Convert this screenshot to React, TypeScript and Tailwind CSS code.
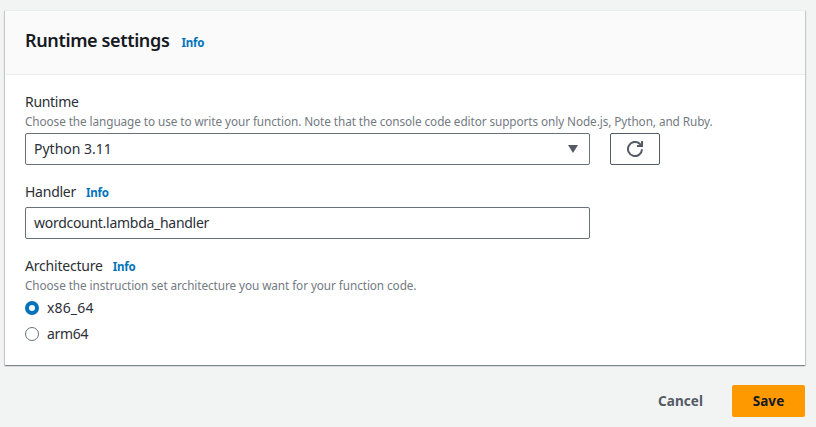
import { useState } from "react";

function Info({ className = "" }: { className?: string }) {
  return (
    <a href="#" className={`text-[11.5px] font-bold leading-4 tracking-[-0.2px] text-[#0073bb] ${className}`}>
      Info
    </a>
  );
}

function Radio({ label, checked, onSelect, tracking }: { label: string; checked: boolean; onSelect: () => void; tracking: string }) {
  return (
    <button type="button" role="radio" aria-checked={checked} onClick={onSelect} className="flex h-[22px] items-center gap-2">
      <span
        className={
          checked
            ? "size-3.5 rounded-full border-4 border-[#0073bb] bg-white"
            : "size-3.5 rounded-full border border-[#687078] bg-white"
        }
      />
      <span className={`text-[14px] leading-[22px] ${tracking}`}>{label}</span>
    </button>
  );
}

export default function App() {
  const [arch, setArch] = useState("x86_64");
  return (
    <main className="h-[427px] w-[816px] overflow-hidden bg-[#f2f3f3] pt-[10px] pr-[11px] pl-[5px] font-['Noto_Sans',sans-serif] text-[14px] leading-[22px] text-[#2b2f36]">
      <section className="h-[355px] border-t border-[#eaeded] bg-white shadow-[0_1px_1px_0_rgba(0,28,36,0.3),1px_1px_1px_0_rgba(0,28,36,0.15),-1px_1px_1px_0_rgba(0,28,36,0.15)]">
        <header className="flex h-16 items-center border-b border-[#eaeded] bg-[#fafafa] px-5 pb-1">
          <h2 className="-mt-px text-[18px] leading-[22px] font-semibold tracking-[-0.36px] text-[#16191f]">Runtime settings</h2>
          <Info className="mt-1 ml-3" />
        </header>
        <div className="px-5 pt-4">
          <div className="leading-[22px] tracking-[-0.3px]">Runtime</div>
          <p className="text-[11.75px] leading-4 tracking-[-0.075px] text-[#737a82]">
            Choose the language to use to write your function. Note that the console code editor supports only Node.js, Python, and Ruby.
          </p>
          <div className="mt-1 flex gap-5">
            <button type="button" className="flex h-8 w-[565px] items-center justify-between rounded-[2px] border border-[#687078] px-2 pr-[11px]">
              <span>Python 3.11</span>
              <svg width="10" height="8" viewBox="0 0 10 8" fill="#545b64">
                <path d="M0 0h10L5 8z" />
              </svg>
            </button>
            <button type="button" aria-label="Refresh" className="flex h-8 w-[50px] items-center justify-center rounded-[2px] border border-[#545b64]">
              <svg width="16" height="16" viewBox="0 0 16 16" fill="none" stroke="#545b64" strokeWidth="2">
                <path d="M15 8.2A7 7 0 1 1 12.6 2.7L14.5 4.5" />
                <path d="M15 0v5h-5" />
              </svg>
            </button>
          </div>
          <div className="mt-4 flex items-center leading-[22px]">
            <span className="tracking-[-0.25px]">Handler</span>
            <Info className="mt-0.5 ml-2.5" />
          </div>
          <div className="mt-1 flex h-8 w-[565px] items-center rounded-[2px] border border-[#687078] px-2 tracking-[-0.28px]">wordcount.lambda_handler</div>
          <div className="mt-4 flex items-center leading-[22px]">
            <span className="tracking-[-0.2px]">Architecture</span>
            <Info className="mt-0.5 ml-2.5" />
          </div>
          <p className="text-[11.75px] leading-4 tracking-[-0.075px] text-[#737a82]">
            Choose the instruction set architecture you want for your function code.
          </p>
          <div role="radiogroup" className="mt-1 flex flex-col items-start gap-1">
            <Radio label="x86_64" tracking="tracking-[0.15px]" checked={arch === "x86_64"} onSelect={() => setArch("x86_64")} />
            <Radio label="arm64" tracking="tracking-[-0.3px]" checked={arch === "arm64"} onSelect={() => setArch("arm64")} />
          </div>
        </div>
      </section>
      <footer className="mt-5 flex justify-end gap-[9px] font-bold">
        <button type="button" className="h-8 px-5 text-[13.5px] tracking-[0.05px] text-[#545b64]">Cancel</button>
        <button type="button" className="h-8 w-[73px] rounded-[2px] bg-[#ff9900] text-[13.5px] tracking-[0.05px] text-[#16191f]">Save</button>
      </footer>
    </main>
  );
}
